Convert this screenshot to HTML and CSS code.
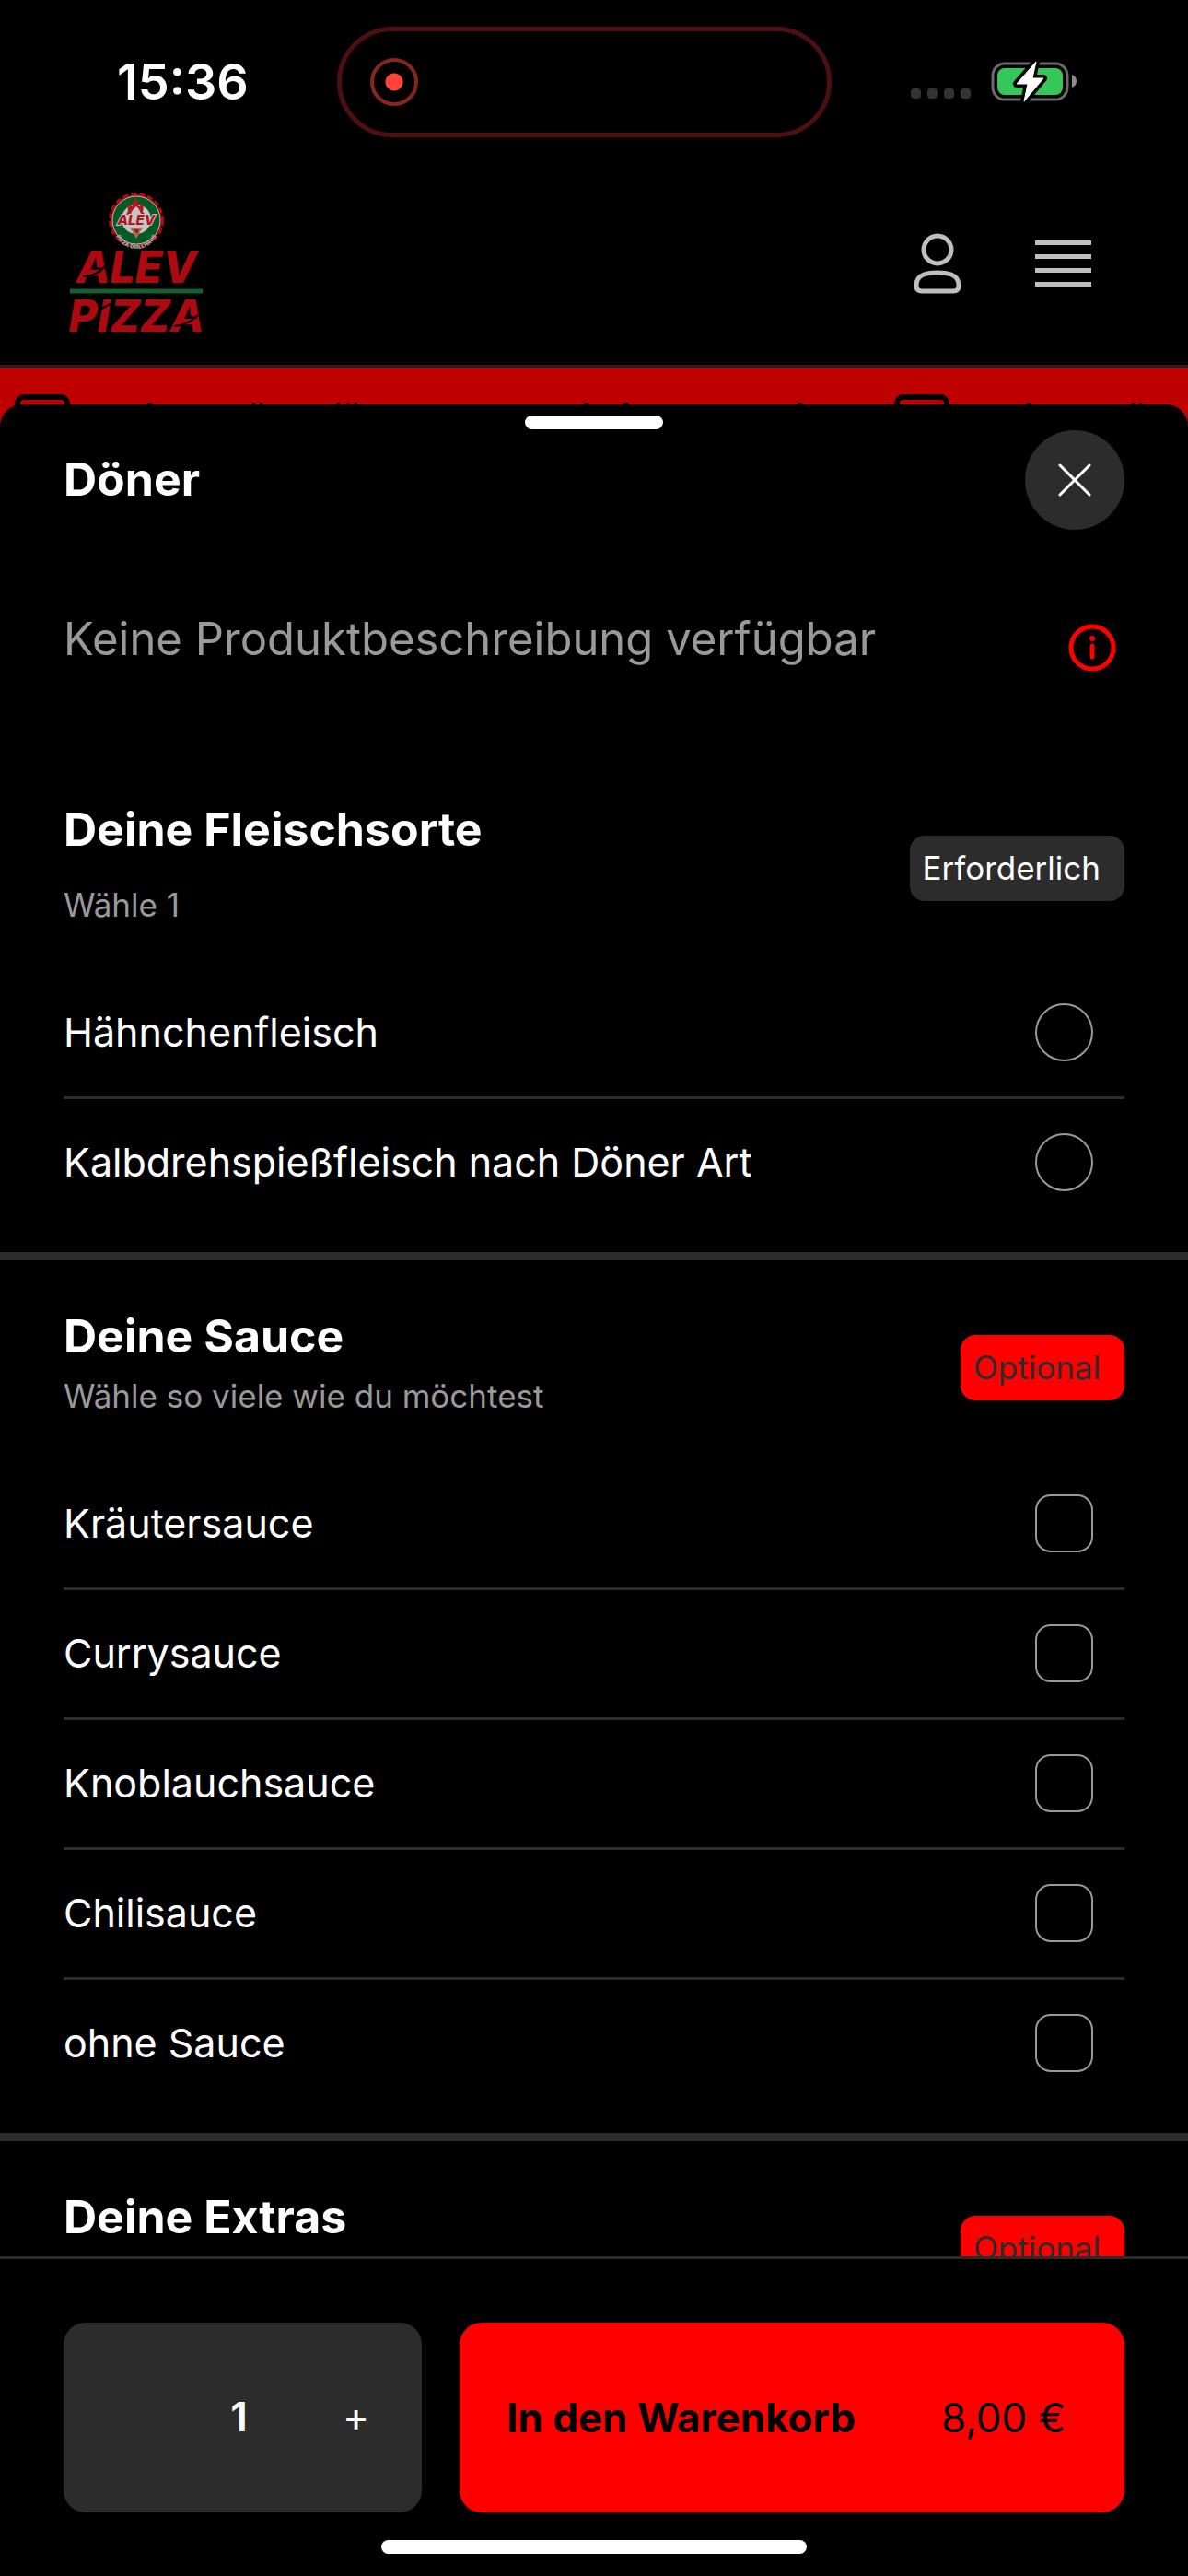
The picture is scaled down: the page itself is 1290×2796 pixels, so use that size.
FILE: index.html
```html
<!DOCTYPE html>
<html lang="de">

<head>
    <meta charset="UTF-8">
    <meta name="viewport" content="width=device-width, initial-scale=1.0">
    <title>Alev Pizza</title>
    <link rel="stylesheet" href="styles.css">
</head>

<body>
    <div class="status-bar">
        <span class="time">15:36</span>
        <div class="island"><span class="record"></span></div>
        <div class="status-icons">
            <div class="signal"><i></i><i></i><i></i><i></i></div>
            <svg class="battery" viewBox="0 0 94 46">
                <rect x="2" y="3" width="81" height="39" rx="13" fill="none" stroke="#6b6b6b" stroke-width="3" />
                <rect x="7" y="8" width="71" height="29" rx="8" fill="#35c759" />
                <path d="M88 15q5 2 5 7t-5 7z" fill="#8a8a8a" />
                <path d="M49 1L28 25h12l-4 19 21-25H45z" fill="#fff" stroke="#000" stroke-width="8" stroke-linejoin="round" />
                <path d="M49 1L28 25h12l-4 19 21-25H45z" fill="#fff" stroke="#fff" stroke-width="1" stroke-linejoin="round" />
            </svg>
        </div>
    </div>

    <header class="header">
        <a href="#" class="logo" aria-label="Alev Pizza">
            <svg viewBox="0 0 144 154" width="144" height="154">
                <circle cx="72" cy="30" r="28" fill="#a80d16" />
                <circle cx="72" cy="30" r="28" fill="none" stroke="#a80d16" stroke-width="4" stroke-dasharray="6 3" />
                <circle cx="72" cy="30" r="26" fill="#075a28" stroke="#b9b9b0" stroke-width="1" />
                <circle cx="72" cy="29" r="16" fill="#c4c4c4" />
                <path d="M63 20q-1-5 3-9 0 4 2 4 0-6 4-10 1 5 3 10 2 0 2-4 4 4 2 10l3 3-5-1q-2-6-5-8-4 3-6 8l-5 1z" fill="#b31622" />
                <path d="M65 38h14l-7 12z" fill="#b06b50" />
                <path d="M69 40h6l-2 5z" fill="#8b2018" />
                <path id="ring" d="M48 37a24 24 0 0 0 48 0" fill="none" />
                <text class="logo-badge" x="72" y="35" text-anchor="middle">ALEV</text>
                <text class="logo-ring"><textPath href="#ring" startOffset="50%" text-anchor="middle">PIZZA GRILLHAUS</textPath></text>
                <text class="logo-text" x="72" y="98" text-anchor="middle">ALEV</text>
                <path d="M14 91q15 0 24-11M27 82l9 1" fill="none" stroke="#000" stroke-width="2" />
                <path d="M0 107h144" stroke="#155f31" stroke-width="5" />
                <text class="logo-text" x="72" y="151" text-anchor="middle">PIZZA</text>
                <path d="M34 126l14-7M113 145q15-1 26-12M129 135l9 1" fill="none" stroke="#000" stroke-width="2" />
            </svg>
        </a>
        <nav class="nav">
            <a href="#" aria-label="Konto">
                <svg viewBox="0 0 52 66" width="52" height="66" fill="none" stroke="#bfbfbf" stroke-width="5">
                    <circle cx="26" cy="18" r="15" />
                    <path d="M9 63q-6 0-6-6 0-9 8-12 6-2 15-2t15 2q8 3 8 12 0 6-6 6z" />
                </svg>
            </a>
            <button class="menu" aria-label="Menü"><i></i><i></i><i></i><i></i></button>
        </nav>
    </header>

    <div class="ticker">
        <svg viewBox="0 0 955 64">
            <rect x="19" y="32" width="54" height="60" rx="7" fill="none" stroke="#000" stroke-width="6" />
            <path d="M160 39h5M274 39h3M282 39h3M366 39h3M376 39h3M385 39h3M634 39h5M677 39h5M866 39h5" stroke="#000" stroke-width="2" />
        </svg>
        <svg viewBox="0 0 955 64">
            <rect x="19" y="32" width="54" height="60" rx="7" fill="none" stroke="#000" stroke-width="6" />
            <path d="M160 39h5M274 39h3M282 39h3" stroke="#000" stroke-width="2" />
        </svg>
    </div>

    <main class="sheet">
        <div class="handle"></div>

        <div class="sheet-header">
            <h1>Döner</h1>
            <button class="close" aria-label="Schließen">
                <svg viewBox="0 0 36 36" width="36" height="36" stroke="#fff" stroke-width="3" stroke-linecap="round">
                    <path d="M2 2l32 32M34 2L2 34" />
                </svg>
            </button>
        </div>

        <div class="description">
            <p>Keine Produktbeschreibung verfügbar</p>
            <button class="info" aria-label="Produktinfo">
                <svg viewBox="0 0 52 52" width="52" height="52" fill="none" stroke="#fe0000" stroke-width="5" stroke-linecap="round">
                    <circle cx="26" cy="26" r="23" />
                    <path d="M26 24v12" />
                    <circle cx="26" cy="16" r="3" fill="#fe0000" stroke="none" />
                </svg>
            </button>
        </div>

        <section class="group">
            <div class="group-header">
                <div class="group-title spaced">
                    <h2>Deine Fleischsorte</h2>
                    <p>Wähle 1</p>
                </div>
                <span class="badge">Erforderlich</span>
            </div>
            <label class="option">Hähnchenfleisch<input type="radio" name="fleisch"></label>
            <label class="option">Kalbdrehspießfleisch nach Döner Art<input type="radio" name="fleisch"></label>
        </section>

        <section class="group">
            <div class="group-header">
                <div class="group-title">
                    <h2>Deine Sauce</h2>
                    <p>Wähle so viele wie du möchtest</p>
                </div>
                <span class="badge optional">Optional</span>
            </div>
            <label class="option">Kräutersauce<input type="checkbox" name="sauce"></label>
            <label class="option">Currysauce<input type="checkbox" name="sauce"></label>
            <label class="option">Knoblauchsauce<input type="checkbox" name="sauce"></label>
            <label class="option">Chilisauce<input type="checkbox" name="sauce"></label>
            <label class="option">ohne Sauce<input type="checkbox" name="sauce"></label>
        </section>

        <section class="group">
            <div class="group-header">
                <div class="group-title">
                    <h2>Deine Extras</h2>
                    <p>&nbsp;</p>
                </div>
                <span class="badge optional">Optional</span>
            </div>
        </section>
    </main>

    <footer class="footer">
        <div class="actions">
            <div class="quantity">
                <input type="text" value="1" aria-label="Anzahl">
                <button aria-label="Mehr">+</button>
            </div>
            <button class="add-to-cart"><b>In den Warenkorb</b><span>8,00 €</span></button>
        </div>
        <div class="home-indicator"></div>
    </footer>
</body>

</html>
```
FILE: styles.css
```css
* {
    box-sizing: border-box;
}

body {
    margin: 0;
    height: 100vh;
    display: flex;
    flex-direction: column;
    overflow: hidden;
    background-color: #000;
    color: #fff;
    font-family: Inter, "Liberation Sans", sans-serif;
    font-size: 43px;
}

h1,
h2,
p {
    margin: 0;
}

button,
input {
    margin: 0;
    padding: 0;
    border: none;
    background: none;
    color: inherit;
    font: inherit;
}

svg {
    display: block;
}

/* Status bar */
.status-bar {
    flex: none;
    display: grid;
    grid-template-columns: 366px 537px 1fr;
    align-items: center;
    height: 178px;
}

.time {
    padding-left: 127px;
    font-size: 54px;
    line-height: 60px;
    font-weight: 600;
}

.island {
    display: flex;
    align-items: center;
    height: 120px;
    padding-left: 31px;
    border: 5px solid #4d0f0f;
    border-radius: 60px;
}

.record {
    width: 52px;
    height: 52px;
    border: 4px solid #85261f;
    border-radius: 50%;
    background: radial-gradient(circle, #ff453a 9px, transparent 10px);
}

.status-icons {
    display: flex;
    justify-content: flex-end;
    align-items: center;
    gap: 22px;
    padding-right: 120px;
}

.signal {
    display: flex;
    gap: 7px;
    padding-top: 24px;
}

.signal i {
    width: 11px;
    height: 11px;
    border-radius: 4px;
    background-color: #333;
}

.battery {
    width: 94px;
    height: 46px;
}

/* Site header */
.header {
    flex: none;
    display: flex;
    justify-content: space-between;
    align-items: center;
    height: 221px;
    padding: 0 105px 2px 76px;
    border-bottom: 3px solid #222;
}

.logo svg {
    overflow: visible;
}

.logo-text,
.logo-badge,
.logo-ring {
    font-family: Inter, sans-serif;
    font-weight: 800;
    font-style: italic;
    fill: #ad0910;
}

.logo-text {
    font-size: 48px;
}

.logo-badge {
    font-size: 15px;
    fill: #b31622;
    stroke: #c4c4c4;
    stroke-width: 2px;
    paint-order: stroke;
}

.logo-ring {
    font-size: 6px;
    font-style: normal;
    fill: #9fb5a4;
}

.nav {
    display: flex;
    align-items: center;
    gap: 80px;
}

.menu {
    display: grid;
    gap: 10px;
    width: 61px;
}

.menu i {
    height: 5px;
    background-color: #bfbfbf;
}

.ticker {
    flex: none;
    display: flex;
    height: 64px;
    overflow: hidden;
    background-color: #be0000;
}

.ticker svg {
    flex: none;
    width: 955px;
    height: 64px;
}

/* Product sheet */
.sheet {
    position: relative;
    flex: 1;
    min-height: 0;
    margin-top: -24px;
    padding-top: 12px;
    overflow: hidden;
    border-radius: 24px 24px 0 0;
    background-color: #000;
}

.handle {
    width: 150px;
    height: 15px;
    margin: 0 auto 1px;
    border-radius: 8px;
    background-color: #fff;
}

.sheet-header,
.description {
    display: flex;
    justify-content: space-between;
    align-items: center;
    padding: 0 69px;
}

h1,
h2 {
    font-size: 50px;
    line-height: 60px;
    font-weight: 700;
}

h1 {
    padding-bottom: 2px;
}

.close {
    display: grid;
    place-items: center;
    width: 108px;
    height: 108px;
    border-radius: 50%;
    background-color: #2c2c2c;
}

.description {
    align-items: flex-end;
    margin: 89px 0;
    padding-right: 78px;
}

.description p {
    padding-bottom: 5px;
    color: #999;
    font-size: 49px;
    line-height: 60px;
}

.group {
    padding: 52px 69px 28px;
    border-bottom: 9px solid #2c2c2c;
}

.group-header {
    display: flex;
    justify-content: space-between;
    align-items: center;
    padding-bottom: 37px;
}

.group-title {
    display: grid;
    gap: 13px;
    padding-bottom: 11px;
}

.group-title.spaced {
    gap: 30px;
}

.group-title p {
    color: #999;
    font-size: 35px;
    line-height: 44px;
}

.badge {
    height: 71px;
    padding: 0 26px 0 14px;
    border-radius: 16px;
    background-color: #2c2c2c;
    font-size: 35px;
    line-height: 70px;
}

.badge.optional {
    background-color: #fe0000;
    color: #2c2c2c;
}

.option {
    display: flex;
    justify-content: space-between;
    align-items: center;
    height: 141px;
    padding: 0 34px 2px 0;
    border-bottom: 3px solid #2c2c2c;
}

.option:last-child {
    height: 138px;
    border-bottom: none;
}

.option input {
    appearance: none;
    width: 63px;
    height: 63px;
    border: 2px solid #999;
    border-radius: 17px;
}

.option input[type="radio"] {
    border-radius: 50%;
}

/* Bottom bar */
.footer {
    flex: none;
    padding: 69px 69px 24px;
    border-top: 3px solid #2c2c2c;
}

.actions {
    display: grid;
    grid-template-columns: 389px 1fr;
    gap: 41px;
    height: 206px;
    font-size: 44px;
}

.quantity {
    display: grid;
    grid-template-columns: repeat(3, 1fr);
    align-items: center;
    padding: 0 8px 2px 0;
    border-radius: 24px;
    background-color: #2c2c2c;
}

.quantity input {
    grid-column: 2;
    width: 100%;
    font-weight: 600;
    text-align: center;
}

.add-to-cart {
    display: flex;
    justify-content: space-between;
    align-items: center;
    padding: 0 64px 0 51px;
    border-radius: 24px;
    background-color: #fe0000;
    color: #000;
}

.home-indicator {
    width: 462px;
    height: 15px;
    margin: 30px auto 0;
    border-radius: 8px;
    background-color: #fff;
}
```
